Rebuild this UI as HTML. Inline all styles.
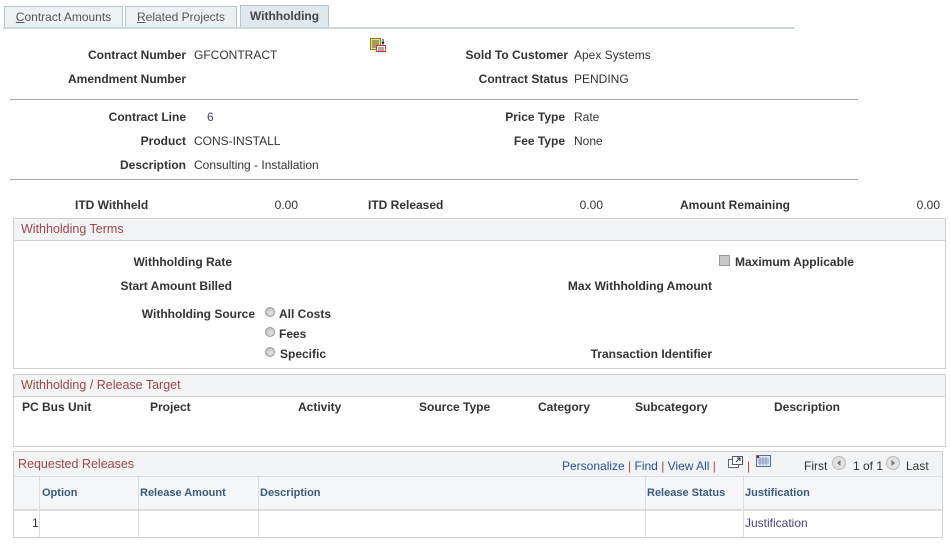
<!DOCTYPE html>
<html><head><style>
body{margin:0;width:950px;height:547px;background:#fff;font-family:"Liberation Sans",Arial,sans-serif;font-size:12px;color:#333;position:relative;overflow:hidden}
.a{position:absolute;line-height:14px;white-space:nowrap;margin-top:1px}
.b{font-weight:bold}
.r{text-align:right}
.tab{position:absolute;top:6px;height:21px;border:1px solid #b9c3cc;border-bottom:none;background:#eef1f4;color:#555;font-size:12px;line-height:21px;text-align:center;box-sizing:border-box}
.hr{position:absolute;left:10px;width:848px;height:1px;background:#a9a9a9}
.box{position:absolute;border:1px solid #cfcfcf;box-sizing:border-box}
.bh{position:absolute;left:0;right:0;top:0;background:#f1f3f4;border-bottom:1px solid #cfcfcf;color:#a0474a;font-size:12.5px;padding-left:7px;box-sizing:border-box}
.rad{position:absolute;width:10px;height:10px;border-radius:50%;background:radial-gradient(circle at 60% 60%,#e4e4e4,#b5b5b5);border:1px solid #9a9a9a;box-sizing:border-box}
.th{position:absolute;color:#3b5a80;font-weight:bold;font-size:11px}
.vl{position:absolute;width:1px;background:#ddd}
.lnk{color:#2a4f9a}
</style></head><body>
<div class="tab" style="left:4px;width:119px"><u>C</u>ontract Amounts</div>
<div class="tab" style="left:125px;width:112px"><u>R</u>elated Projects</div>
<div class="tab b" style="left:240px;width:89px;top:5px;height:23px;background:#dfe7ef;color:#444">Withholding</div>
<div style="position:absolute;left:3px;top:27px;width:792px;height:2px;background:#ccd6e0"></div>
<svg class="a" style="left:370px;top:37px" width="17" height="15" viewBox="0 0 17 15"><rect x="0.5" y="0.5" width="10" height="11" fill="#f3e36a" stroke="#8a7d2a"/><path d="M2 3h7M2 5h7M2 7h7M2 9h7" stroke="#555"/><rect x="6.5" y="7.5" width="9" height="6" fill="#fff" stroke="#c0393b"/><path d="M8 10h6M8 12h6" stroke="#555"/><path d="M13 1v4M12 4l1 2 1-2" stroke="#222" fill="none"/></svg>

<div class="a b r" style="right:764px;top:47px">Contract Number</div>
<div class="a" style="left:194px;top:47px">GFCONTRACT</div>
<div class="a b r" style="right:764px;top:71px">Amendment Number</div>
<div class="a b r" style="right:382px;top:47px">Sold To Customer</div>
<div class="a" style="left:574px;top:47px">Apex Systems</div>
<div class="a b r" style="right:382px;top:71px">Contract Status</div>
<div class="a" style="left:574px;top:71px">PENDING</div>
<div class="hr" style="top:99px"></div>

<div class="a b r" style="right:764px;top:109px">Contract Line</div>
<div class="a lnk" style="left:207px;top:109px;color:#4a3f7a">6</div>
<div class="a b r" style="right:764px;top:133px">Product</div>
<div class="a" style="left:194px;top:133px">CONS-INSTALL</div>
<div class="a b r" style="right:764px;top:157px">Description</div>
<div class="a" style="left:194px;top:157px">Consulting - Installation</div>
<div class="a b r" style="right:385px;top:109px">Price Type</div>
<div class="a" style="left:574px;top:109px">Rate</div>
<div class="a b r" style="right:385px;top:133px">Fee Type</div>
<div class="a" style="left:574px;top:133px">None</div>
<div class="hr" style="top:179px"></div>

<div class="a b" style="left:75px;top:197px">ITD Withheld</div>
<div class="a r" style="right:652px;top:197px">0.00</div>
<div class="a b" style="left:368px;top:197px">ITD Released</div>
<div class="a r" style="right:347px;top:197px">0.00</div>
<div class="a b" style="left:680px;top:197px">Amount Remaining</div>
<div class="a r" style="right:10px;top:197px">0.00</div>

<div class="box" style="left:13px;top:218px;width:933px;height:151px">
 <div class="bh" style="height:22px;line-height:20px">Withholding Terms</div>
</div>
<div class="a b r" style="right:718px;top:254px">Withholding Rate</div>
<div class="a b r" style="right:718px;top:278px">Start Amount Billed</div>
<div class="a b r" style="right:695px;top:306px">Withholding Source</div>
<div class="rad" style="left:265px;top:307px"></div><div class="a b" style="left:279px;top:306px">All Costs</div>
<div class="rad" style="left:265px;top:327px"></div><div class="a b" style="left:279px;top:326px">Fees</div>
<div class="rad" style="left:265px;top:347px"></div><div class="a b" style="left:280px;top:346px">Specific</div>
<div style="position:absolute;left:719px;top:255px;width:11px;height:11px;border:1px solid #999;background:#c8c8c8;box-sizing:border-box"></div>
<div class="a b" style="left:735px;top:254px">Maximum Applicable</div>
<div class="a b r" style="right:238px;top:278px">Max Withholding Amount</div>
<div class="a b r" style="right:238px;top:346px">Transaction Identifier</div>

<div class="box" style="left:13px;top:374px;width:933px;height:73px">
 <div class="bh" style="height:22px;line-height:20px">Withholding / Release Target</div>
</div>
<div class="a b" style="left:22px;top:399px">PC Bus Unit</div>
<div class="a b" style="left:150px;top:399px">Project</div>
<div class="a b" style="left:298px;top:399px">Activity</div>
<div class="a b" style="left:419px;top:399px">Source Type</div>
<div class="a b" style="left:538px;top:399px">Category</div>
<div class="a b" style="left:635px;top:399px">Subcategory</div>
<div class="a b" style="left:774px;top:399px">Description</div>

<div class="box" style="left:13px;top:451px;width:930px;height:87px;border-color:#d0d0d0">
 <div class="bh" style="height:25px;line-height:24px;border-bottom:1px solid #ddd;padding-left:4px">Requested Releases</div>
 <div style="position:absolute;left:0;right:0;top:25px;height:32px;background:#f5f6f7;border-bottom:2px solid #ddd"></div>
</div>
<div class="a lnk" style="left:562px;top:458px">Personalize <span style="color:#a0474a">|</span> Find <span style="color:#a0474a">|</span> View All <span style="color:#a0474a">|</span></div>
<svg class="a" style="left:728px;top:455px" width="15" height="13"><rect x="0.5" y="3.5" width="10" height="8" fill="#fff" stroke="#667"/><rect x="4.5" y="0.5" width="10" height="8" fill="#fff" stroke="#556"/><path d="M8 6l4-4M9 2h3v3" stroke="#334" fill="none"/></svg>
<div class="a" style="left:747px;top:458px;color:#a0474a">|</div>
<svg class="a" style="left:756px;top:454px" width="15" height="12"><rect x="0.5" y="0.5" width="14" height="11" fill="#dfe6ee" stroke="#5070a0"/><path d="M2 4h11M2 6h11M2 8h11M4 2v8M7 2v8M10 2v8" stroke="#8aa0c0"/><rect x="1" y="1" width="2" height="2" fill="#d00"/></svg>
<div class="a" style="left:804px;top:458px">First</div>
<svg style="position:absolute;left:832px;top:456px" width="14" height="14"><circle cx="7" cy="7" r="6.5" fill="#e2e2e2" stroke="#bbb"/><path d="M8.5 4v6L5 7z" fill="#777"/></svg>
<div class="a" style="left:853px;top:458px">1 of 1</div>
<svg style="position:absolute;left:886px;top:456px" width="14" height="14"><circle cx="7" cy="7" r="6.5" fill="#e2e2e2" stroke="#bbb"/><path d="M5.5 4v6L9 7z" fill="#777"/></svg>
<div class="a" style="left:906px;top:458px">Last</div>

<div class="vl" style="left:39px;top:477px;height:60px"></div>
<div class="vl" style="left:138px;top:477px;height:60px"></div>
<div class="vl" style="left:258px;top:477px;height:60px"></div>
<div class="vl" style="left:645px;top:477px;height:60px"></div>
<div class="vl" style="left:743px;top:477px;height:60px"></div>
<div class="th a" style="left:42px;top:485px">Option</div>
<div class="th a" style="left:140px;top:485px">Release Amount</div>
<div class="th a" style="left:260px;top:485px">Description</div>
<div class="th a" style="left:647px;top:485px">Release Status</div>
<div class="th a" style="left:745px;top:485px">Justification</div>
<div class="a" style="left:32px;top:515px">1</div>
<div class="a" style="left:745px;top:515px;color:#4a3f7a">Justification</div>
</body></html>
